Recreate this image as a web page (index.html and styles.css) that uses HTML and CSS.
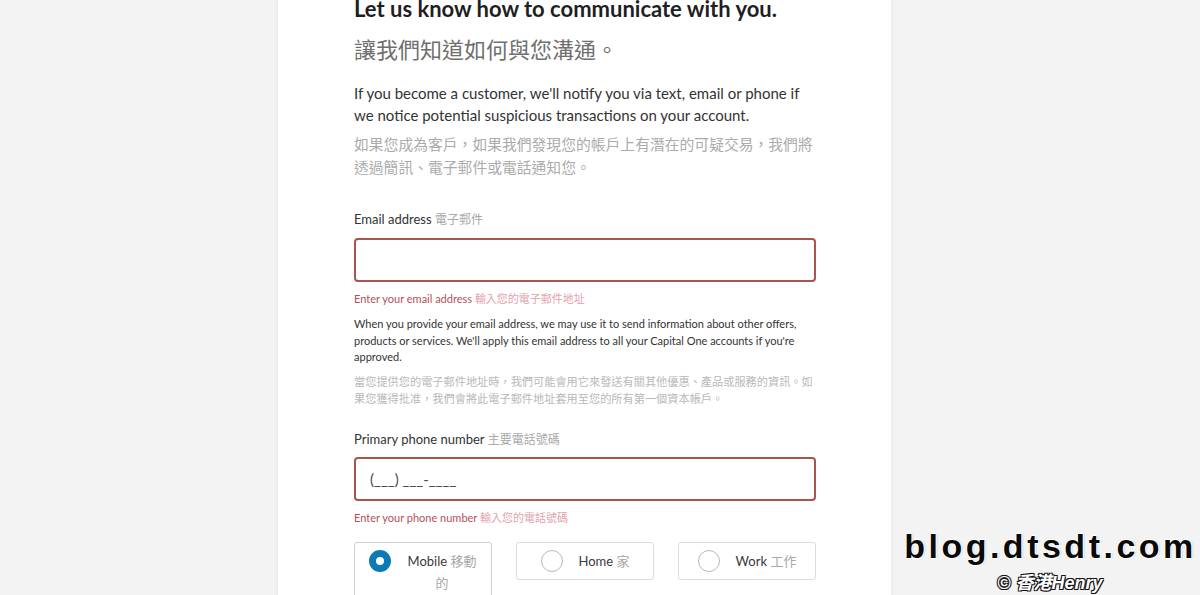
FILE: index.html
```html
<!DOCTYPE html>
<html lang="en">
<head>
<meta charset="utf-8">
<title>Let us know how to communicate with you</title>
<link rel="stylesheet" href="styles.css">
</head>
<body>
<main class="card">
  <h1 class="title">Let us know how to communicate with you.</h1>
  <p class="title-zh">讓我們知道如何與您溝通。</p>
  <p class="intro">If you become a customer, we'll notify you via text, email or phone if we notice potential suspicious transactions on your account.</p>
  <p class="intro-zh">如果您成為客戶，如果我們發現您的帳戶上有潛在的可疑交易，我們將透過簡訊、電子郵件或電話通知您。</p>

  <label class="field-label first">Email address <span class="zh">電子郵件</span></label>
  <div class="input"></div>
  <p class="error">Enter your email address <span class="zh">輸入您的電子郵件地址</span></p>
  <p class="help">When you provide your email address, we may use it to send information about other offers, products or services. We'll apply this email address to all your Capital One accounts if you're approved.</p>
  <p class="help-zh">當您提供您的電子郵件地址時，我們可能會用它來發送有關其他優惠、產品或服務的資訊。如果您獲得批准，我們會將此電子郵件地址套用至您的所有第一個資本帳戶。</p>

  <label class="field-label second">Primary phone number <span class="zh">主要電話號碼</span></label>
  <div class="input"><span class="placeholder">(___) ___-____</span></div>
  <p class="error">Enter your phone number <span class="zh">輸入您的電話號碼</span></p>

  <div class="types">
    <div class="type type-tall">
      <span class="radio checked"></span>
      <span class="type-text">Mobile <span class="zh">移動的</span></span>
    </div>
    <div class="type">
      <span class="radio"></span>
      <span class="type-text">Home <span class="zh">家</span></span>
    </div>
    <div class="type">
      <span class="radio"></span>
      <span class="type-text">Work <span class="zh">工作</span></span>
    </div>
  </div>
</main>

<div class="watermark">
  <div class="wm-site">blog.dtsdt.com</div>
  <div class="wm-credit">© 香港Henry</div>
</div>
</body>
</html>
```

FILE: styles.css
```css
html, body {
  margin: 0;
  padding: 0;
  height: 595px;
  overflow: hidden;
}
body {
  background: #f3f3f3;
  font-family: Lato, "Noto Sans CJK TC", sans-serif;
  color: #2f2f2f;
}
.card {
  margin-left: 278px;
  width: 613px;
  height: 640px;
  background: #fff;
  box-shadow: 0 0 4px rgba(0, 0, 0, 0.08);
  box-sizing: border-box;
  padding: 0 75px 0 76px;
}
.zh {
  font-family: "Noto Sans CJK TC", sans-serif;
  color: #a8a8a8;
}
.title {
  margin: -4px 0 0;
  font-size: 22px;
  line-height: 26px;
  font-weight: 700;
  color: #1f1f1f;
  white-space: nowrap;
}
.title-zh {
  margin: 11px 0 0;
  font-family: "Noto Sans CJK TC", sans-serif;
  font-size: 22px;
  line-height: 30px;
  color: #6f6f6f;
}
.intro {
  margin: 19px 0 0;
  font-size: 15px;
  line-height: 22px;
  color: #333;
}
.intro-zh {
  margin: 6px 0 0;
  font-family: "Noto Sans CJK TC", sans-serif;
  font-size: 14.8px;
  line-height: 23px;
  color: #ababab;
}
.field-label {
  display: block;
  font-size: 13px;
  line-height: 18px;
  color: #333;
}
.field-label.first { margin-top: 32px; }
.field-label.second { margin-top: 23px; }
.field-label .zh { font-size: 12px; }
.input {
  margin-top: 10px;
  height: 44px;
  box-sizing: border-box;
  border: 2px solid #a9544e;
  border-radius: 4px;
  display: flex;
  align-items: center;
  padding-left: 14px;
}
.field-label.second + .input { margin-top: 9px; }
.placeholder {
  font-size: 15px;
  color: #4a4a4a;
}
.error {
  margin: 8px 0 0;
  font-size: 11px;
  line-height: 16px;
  color: #b3505a;
}
.error .zh {
  color: #e3a2ab;
}
.help {
  margin: 9px 0 0;
  font-size: 11px;
  line-height: 16.5px;
  color: #333;
}
.help-zh {
  margin: 7px 0 0;
  font-family: "Noto Sans CJK TC", sans-serif;
  font-size: 11.2px;
  line-height: 17px;
  color: #b8b8b8;
}
.types {
  margin-top: 16px;
  display: grid;
  grid-template-columns: repeat(3, 138px);
  justify-content: space-between;
  align-items: start;
}
.type {
  height: 38px;
  box-sizing: border-box;
  border: 1px solid #dcdcdc;
  border-radius: 3px;
  display: flex;
  align-items: center;
  justify-content: center;
  gap: 16px;
  font-size: 13px;
  color: #3a3a3a;
}
.type-tall {
  height: 60px;
  align-items: flex-start;
  padding-top: 7px;
  border-color: #cfcfcf;
}
.type-tall .type-text {
  width: 70px;
  text-align: center;
  line-height: 22px;
  margin-top: 0;
}
.radio {
  width: 22px;
  height: 22px;
  box-sizing: border-box;
  border: 1px solid #b9b9b9;
  border-radius: 50%;
  flex: none;
}
.radio.checked {
  border: 7px solid #0b7ab5;
  background: #fff;
}
.watermark {
  position: absolute;
  left: 900px;
  top: 526px;
  width: 300px;
  text-align: center;
}
.wm-site {
  font-family: "Liberation Sans", Arial, sans-serif;
  font-weight: 700;
  font-size: 34px;
  line-height: 40px;
  letter-spacing: 3.5px;
  margin-left: 1px;
  color: #0a0a0a;
  text-shadow: -1px 0 #fff, 1px 0 #fff, 0 -1px #fff, 0 1px #fff, 2px 0 #ddd;
  white-space: nowrap;
}
.wm-credit {
  font-family: "Liberation Sans", "Noto Sans CJK TC", sans-serif;
  font-weight: 700;
  font-style: italic;
  font-size: 18px;
  line-height: 22px;
  color: #fff;
  margin-top: 6px;
  text-shadow: -1px -1px 0 #111, 1px -1px 0 #111, -1px 1px 0 #111, 1px 1px 0 #111;
}
```
